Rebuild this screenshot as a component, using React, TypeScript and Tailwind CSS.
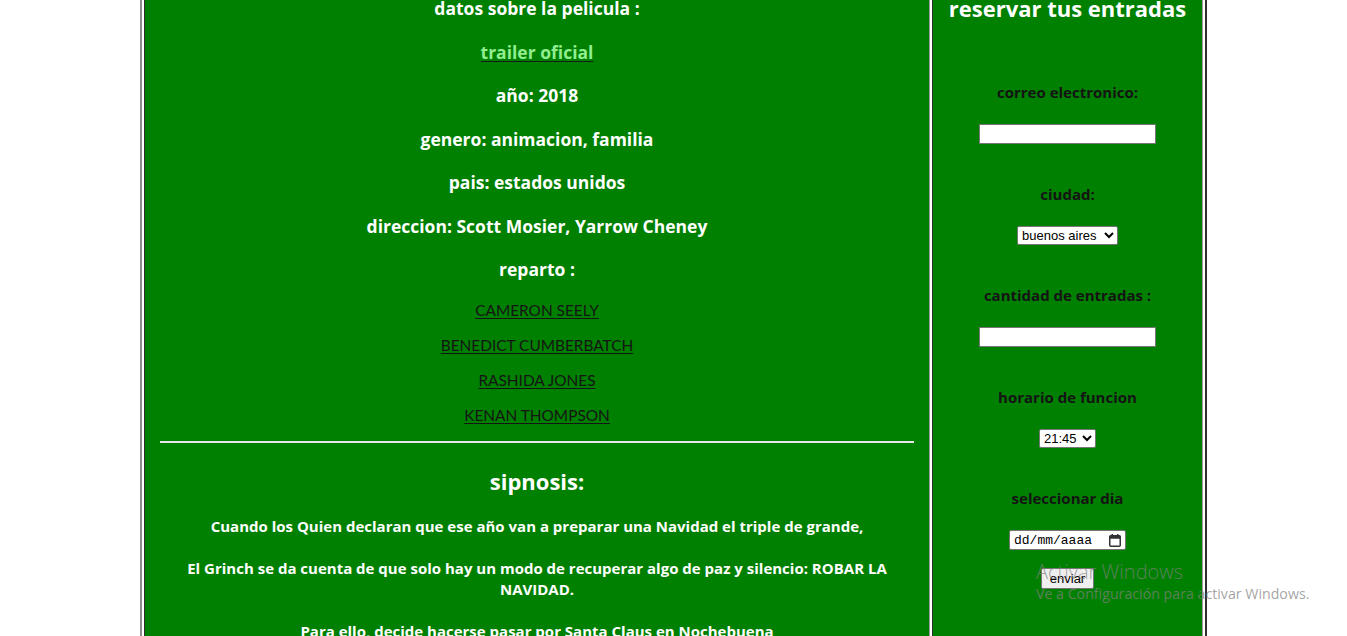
import React from 'react';

const cast = ['CAMERON SEELY', 'BENEDICT CUMBERBATCH', 'RASHIDA JONES', 'KENAN THOMPSON'];

const datos = [
    'año: 2018',
    'genero: animacion, familia',
    'pais: estados unidos',
    'direccion: Scott Mosier, Yarrow Cheney',
    'reparto :',
];

const sinopsis = [
    'Cuando los Quien declaran que ese año van a preparar una Navidad el triple de grande,',
    'El Grinch se da cuenta de que solo hay un modo de recuperar algo de paz y silencio: ROBAR LA NAVIDAD.',
    'Para ello, decide hacerse pasar por Santa Claus en Nochebuena',
    'e incluso llega a atrapar a un reno bastante desquiciado para que tire de su trineo.',
];

const Label: React.FC<{ text: string; first?: boolean }> = ({ text, first }) => (
    <div className={`${first ? 'mt-[59px]' : 'mt-[40px]'} text-[15px] leading-[20px] font-bold text-[#141414]`}>
        {text}
    </div>
);

const TextInput = () => (
    <input
        type="text"
        className="mt-[22px] block w-[177px] h-[20px] bg-white border border-[#767676] px-1 text-[13px] text-black"
    />
);

const SelectBox: React.FC<{ options: string[]; width: string }> = ({ options, width }) => (
    <select
        className={`mt-[22px] block ${width} h-[19px] bg-white border border-[#767676] rounded-[2px] text-[13px] leading-[15px] font-['Liberation_Sans',Arial,sans-serif] text-black`}
    >
        {options.map((o) => (
            <option key={o}>{o}</option>
        ))}
    </select>
);

const DateBox = () => (
    <div className="mt-[22px] flex items-center justify-between w-[117px] h-[20px] bg-white border border-[#767676] rounded-[2px] pl-[4px] pr-[4px]">
        <span className="font-['Liberation_Mono',monospace] text-[13px] leading-[15px] text-black">dd/mm/aaaa</span>
        <svg width="12" height="13" viewBox="0 0 12 13" className="text-[#333]">
            <rect x="0.75" y="1.75" width="10.5" height="10.5" rx="1" fill="none" stroke="currentColor" strokeWidth="1.5" />
            <rect x="0.75" y="1.75" width="10.5" height="3" fill="currentColor" />
            <rect x="2.5" y="0" width="1.5" height="2.5" fill="currentColor" />
            <rect x="8" y="0" width="1.5" height="2.5" fill="currentColor" />
        </svg>
    </div>
);

export default function App() {
    return (
        <div className="relative h-[636px] overflow-hidden bg-white font-['Open_Sans','Noto_Sans',sans-serif]">
            <div className="mx-auto w-[1067px] h-full flex border-l-2 border-l-[#8c8c8c] border-r-2 border-r-[#2e2e2e] px-[2px] bg-white">
                {/* columna de datos */}
                <div className="w-[785px] h-full border-l border-l-[#2e2e2e] bg-[#008000] px-[15px] text-center text-white">
                    <div className="-mt-[4px]">
                        <h3 className="text-[17.5px] leading-[25px] font-bold mb-[18.5px]">datos sobre la pelicula :</h3>
                        <h3 className="text-[17.5px] leading-[25px] font-bold mb-[18.5px]">
                            <a href="#" className="text-[#90ee90] underline decoration-[#1a1a1a] underline-offset-2">
                                trailer oficial
                            </a>
                        </h3>
                        {datos.map((d) => (
                            <h3 key={d} className="text-[17.5px] leading-[25px] font-bold mb-[18.5px]">
                                {d}
                            </h3>
                        ))}
                        {cast.map((c) => (
                            <p key={c} className="mb-[16px] text-[15.4px] leading-[19px] font-['Lato',sans-serif]">
                                <a href="#" className="text-[#151515] underline underline-offset-2">
                                    {c}
                                </a>
                            </p>
                        ))}
                        <div className="mt-[16px] h-[2px] bg-[#e8e8e8]" />
                        <h2 className="mt-[23px] text-[22px] leading-[30px] font-bold">sipnosis:</h2>
                        <div className="mt-[20px] px-[20px] text-[15px] leading-[21px] font-bold">
                            {sinopsis.map((s) => (
                                <p key={s} className="mb-[21px]">
                                    {s}
                                </p>
                            ))}
                        </div>
                    </div>
                </div>

                {/* separador */}
                <div className="w-[4px] h-full flex">
                    <div className="w-px bg-[#9a9a9a]" />
                    <div className="w-[2px] bg-white" />
                    <div className="w-px bg-[#2e2e2e]" />
                </div>

                {/* reserva */}
                <div className="flex-1 h-full border-r border-r-[#9a9a9a] bg-[#008000] flex flex-col items-center text-center">
                    <h2 className="-mt-[7px] text-[22px] leading-[30px] font-bold text-white">reservar tus entradas</h2>
                    <Label text="correo electronico:" first />
                    <TextInput />
                    <Label text="ciudad:" />
                    <SelectBox options={['buenos aires', 'cordoba', 'rosario']} width="w-[101px]" />
                    <Label text="cantidad de entradas :" />
                    <TextInput />
                    <Label text="horario de funcion" />
                    <SelectBox options={['21:45', '18:30', '23:00']} width="w-[57px]" />
                    <Label text="seleccionar dia" />
                    <DateBox />
                    <button className="mt-[18px] w-[53px] h-[21px] bg-[#efefef] border border-[#767676] rounded-[2px] text-[13px] leading-[15px] font-['Liberation_Sans',Arial,sans-serif] text-black">
                        enviar
                    </button>
                </div>
            </div>

            {/* marca de agua de windows */}
            <div className="absolute left-[1036px] top-[560px] text-[rgba(128,128,128,0.72)] pointer-events-none font-['Open_Sans',sans-serif]">
                <div className="text-[20px] leading-[24px] font-light">Activar Windows</div>
                <div className="text-[14.2px] leading-[19px]">Ve a Configuración para activar Windows.</div>
            </div>
        </div>
    );
}
